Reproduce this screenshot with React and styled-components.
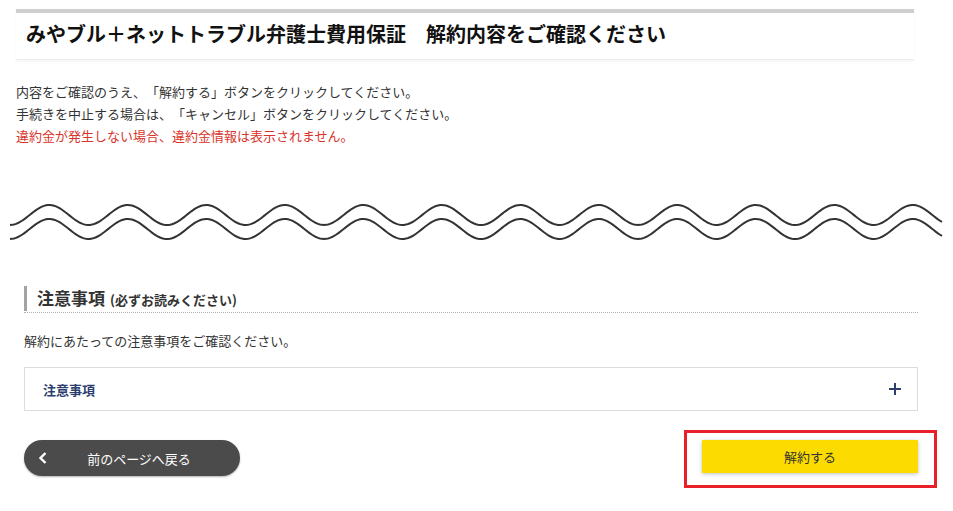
import React from 'react';
import styled, { createGlobalStyle } from 'styled-components';

const GlobalStyle = createGlobalStyle`
    body {
        margin: 0;
        background: #FFFFFF;
        font-family: "Noto Sans CJK JP", "Noto Sans", sans-serif;
        color: #333333;
        text-spacing-trim: space-all;
    }
`;

const Page = styled.div`
    width: 953px;
    min-height: 511px;
    box-sizing: border-box;
    padding-top: 9px;
`;

const Top = styled.div`
    padding: 0 16px;
`;

const Header = styled.div`
    width: 898px;
    border-top: 4px solid #cfcfcf;
    border-bottom: 1px solid #ececec;
    box-shadow: 0 2px 3px rgba(0, 0, 0, 0.04);
    padding: 8px 10px 12px;
    box-sizing: border-box;
`;

const Title = styled.h1`
    margin: 0;
    font-size: 20px;
    line-height: 26px;
    font-weight: 700;
    color: #111111;
`;

const Intro = styled.div`
    margin-top: 21px;
    font-size: 13px;
    line-height: 22px;
    color: #333333;
`;

const Line = styled.p`
    margin: 0;
    color: ${(p) => (p.$alert ? '#d8342b' : '#333333')};
`;

const WaveBox = styled.div`
    margin-top: 48px;
    height: 55px;

    svg {
        display: block;
    }
`;

const Bottom = styled.div`
    margin-top: 36px;
    padding-left: 24px;
    width: 894px;
`;

const SectionHead = styled.div`
    border-bottom: 1px dotted #b0b0b0;
    padding-bottom: 1px;
`;

const HeadTitle = styled.h2`
    margin: 0;
    border-left: 3px solid #a3a3a3;
    padding-left: 10px;
    line-height: 23px;
    font-size: 17px;
    font-weight: 700;
    color: #333333;

    small {
        margin-left: 5px;
        font-size: 13px;
        font-weight: 700;
    }
`;

const Note = styled.p`
    margin: 17px 0 0;
    font-size: 13px;
    line-height: 22px;
`;

const Accordion = styled.div`
    margin-top: 15px;
    height: 44px;
    box-sizing: border-box;
    border: 1px solid #dcdcdc;
    display: flex;
    align-items: center;
    justify-content: space-between;
    padding: 0 15px 0 18px;
    font-size: 13px;
    font-weight: 700;
    color: #2d3e6e;
`;

const Actions = styled.div`
    margin-top: 29px;
    display: flex;
    justify-content: space-between;
    align-items: flex-start;
`;

const BackButton = styled.button`
    position: relative;
    width: 216px;
    height: 36px;
    border: none;
    border-radius: 18px;
    background: #4b4b4b;
    color: #FFFFFF;
    font-family: inherit;
    font-size: 13px;
    padding: 0 0 0 14px;
    box-shadow: 0 1px 2px rgba(0, 0, 0, 0.3);

    svg {
        position: absolute;
        left: 15px;
        top: 12px;
    }
`;

const Highlight = styled.div`
    position: relative;

    &::after {
        content: '';
        position: absolute;
        top: -10px;
        left: -18px;
        right: -19px;
        bottom: -15px;
        border: 3px solid #e8202a;
        pointer-events: none;
    }
`;

const SubmitButton = styled.button`
    display: block;
    width: 216px;
    height: 33px;
    border: none;
    background: #fcdb00;
    color: #333333;
    font-family: inherit;
    font-size: 13px;
    box-shadow: 0 1px 4px rgba(0, 0, 0, 0.25);
`;

function wavePath(base) {
    const pts = [];
    for (let x = 10; x <= 943; x += 2) {
        const y = base + 10 * Math.cos((2 * Math.PI * (x - 10)) / 78.5);
        pts.push(`${x},${y.toFixed(2)}`);
    }
    return 'M' + pts.join(' L');
}

function Wave() {
    return (
        <WaveBox>
            <svg width="953" height="55" viewBox="0 0 953 55">
                <path d={wavePath(20)} fill="none" stroke="#333" strokeWidth="2" />
                <path d={wavePath(34)} fill="none" stroke="#333" strokeWidth="2" />
            </svg>
        </WaveBox>
    );
}

export default function App() {
    return (
        <Page>
            <GlobalStyle />
            <Top>
                <Header>
                    <Title>みやブル＋ネットトラブル弁護士費用保証　解約内容をご確認ください</Title>
                </Header>
                <Intro>
                    <Line>内容をご確認のうえ、「解約する」ボタンをクリックしてください。</Line>
                    <Line>手続きを中止する場合は、「キャンセル」ボタンをクリックしてください。</Line>
                    <Line $alert>違約金が発生しない場合、違約金情報は表示されません。</Line>
                </Intro>
            </Top>
            <Wave />
            <Bottom>
                <SectionHead>
                    <HeadTitle>注意事項<small>(必ずお読みください)</small></HeadTitle>
                </SectionHead>
                <Note>解約にあたっての注意事項をご確認ください。</Note>
                <Accordion>
                    <span>注意事項</span>
                    <svg width="14" height="14" viewBox="0 0 14 14">
                        <path d="M7 1 V13 M1 7 H13" stroke="#2d3e6e" strokeWidth="2" />
                    </svg>
                </Accordion>
                <Actions>
                    <BackButton>
                        <svg width="8" height="12" viewBox="0 0 8 12">
                            <polyline points="6.5,1 1.5,6 6.5,11" fill="none" stroke="#fff" strokeWidth="2.4" />
                        </svg>
                        前のページへ戻る
                    </BackButton>
                    <Highlight>
                        <SubmitButton>解約する</SubmitButton>
                    </Highlight>
                </Actions>
            </Bottom>
        </Page>
    );
}
